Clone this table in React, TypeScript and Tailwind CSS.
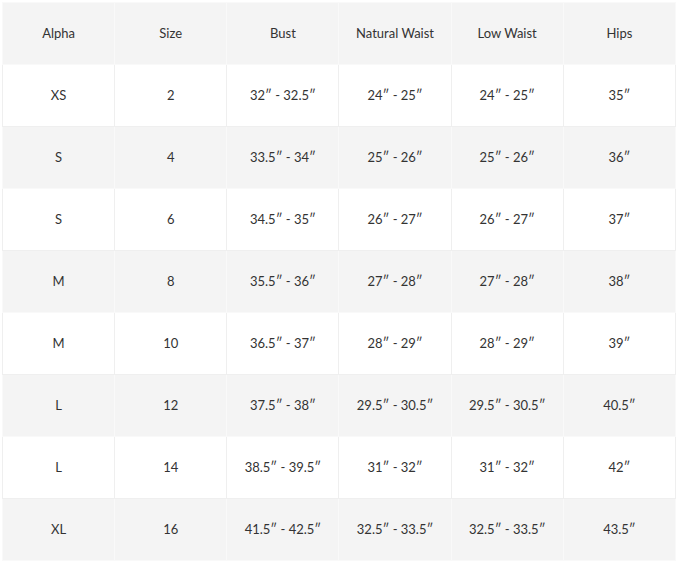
const HEADERS = ["Alpha", "Size", "Bust", "Natural Waist", "Low Waist", "Hips"];

const ROWS: string[][] = [
  ["XS", "2", "32″ - 32.5″", "24″ - 25″", "24″ - 25″", "35″"],
  ["S", "4", "33.5″ - 34″", "25″ - 26″", "25″ - 26″", "36″"],
  ["S", "6", "34.5″ - 35″", "26″ - 27″", "26″ - 27″", "37″"],
  ["M", "8", "35.5″ - 36″", "27″ - 28″", "27″ - 28″", "38″"],
  ["M", "10", "36.5″ - 37″", "28″ - 29″", "28″ - 29″", "39″"],
  ["L", "12", "37.5″ - 38″", "29.5″ - 30.5″", "29.5″ - 30.5″", "40.5″"],
  ["L", "14", "38.5″ - 39.5″", "31″ - 32″", "31″ - 32″", "42″"],
  ["XL", "16", "41.5″ - 42.5″", "32.5″ - 33.5″", "32.5″ - 33.5″", "43.5″"],
];

export default function App() {
  return (
    <div className="h-[562px] w-[679px] bg-white pl-[2px] pt-[2px]" style={{ fontFamily: "Lato, 'Open Sans', sans-serif" }}>
      <table className="w-[674px] table-fixed border-collapse text-[13px] text-[#333]">
        <thead>
          <tr className="h-[62px] bg-[#f4f4f4]">
            {HEADERS.map((h) => (
              <th key={h} className="border border-[#f9f9f9] text-center font-normal">
                {h}
              </th>
            ))}
          </tr>
        </thead>
        <tbody>
          {ROWS.map((row, i) => (
            <tr key={i} className={i % 2 === 0 ? "h-[62px] bg-white" : "h-[62px] bg-[#f4f4f4]"}>
              {row.map((cell, j) => (
                <td
                  key={j}
                  className={i % 2 === 0 ? "border border-[#efefef] text-center" : "border border-[#f9f9f9] text-center"}
                >
                  {cell}
                </td>
              ))}
            </tr>
          ))}
        </tbody>
      </table>
    </div>
  );
}
